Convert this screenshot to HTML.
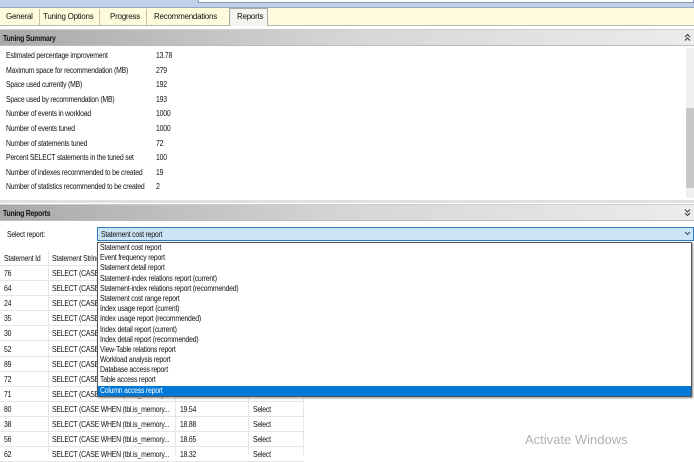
<!DOCTYPE html>
<html><head><style>
*{margin:0;padding:0;box-sizing:border-box}
body{width:694px;height:455px;overflow:hidden;background:#fff;font-family:"Liberation Sans",sans-serif;font-size:8px;color:#111;position:relative;letter-spacing:-0.25px}
.a{position:absolute;white-space:nowrap}
.n{transform:scaleX(0.86);transform-origin:0 0}
.hdr{position:absolute;left:0;width:694px;height:17px;background:linear-gradient(to right,#a9a9a9,#d6d6d6 50%,#ececec);font-weight:bold;padding:4px 0 0 3px;border-top:1px solid #ccc;border-bottom:1px solid #bbb}
.tab{position:absolute;top:9px;height:16px;line-height:16px;border-right:1px solid #c8c4a0;padding:0 6px}
.row{position:absolute;left:0;height:15px;line-height:15px;width:304px;border-bottom:1px solid #e6e6e6}
.row span{position:absolute;transform:scaleX(0.86);transform-origin:0 0}
.dd div{height:10.2px;line-height:10.2px;padding-left:2px}
.dd div span{display:inline-block;transform:scaleX(0.86);transform-origin:0 0}
</style></head><body>
<div class="a" style="left:0;top:0;width:694px;height:8px;background:#bfd0e8;border-bottom:1px solid #8fa8c8"></div>
<div class="a" style="left:198px;top:0;width:496px;height:3px;background:#fff;border:1px solid #8a9ab0;border-top:none"></div>
<div class="a" style="left:0;top:8px;width:694px;height:18px;background:#fefcdc;border-bottom:1px solid #b8b8b0"></div>
<div class="tab" style="left:0">General</div>
<div class="tab" style="left:37px">Tuning Options</div>
<div class="tab" style="left:104px">Progress</div>
<div class="tab" style="left:148px;border-right:none">Recommendations</div>
<div class="a" style="left:229px;top:8px;width:39px;height:18px;background:#f4f4f0;border:1px solid #aaa;border-bottom:none;padding:3px 0 0 7px">Reports</div>
<div class="hdr" style="top:29px"><span class="a n" style="position:static;display:inline-block">Tuning Summary</span></div>
<svg class="a" style="left:684px;top:33px" width="7" height="9"><path d="M1 4L3.5 1.5L6 4M1 7.5L3.5 5L6 7.5" stroke="#333" fill="none"/></svg>
<div id="sum"></div>
<div class="a" style="left:686px;top:48px;width:8px;height:150px;background:#f0f0f0"></div>
<div class="a" style="left:686px;top:108px;width:8px;height:80px;background:#c8c8c8"></div>
<div class="a" style="left:0;top:200px;width:694px;height:3px;background:#e0e0e0"></div>
<div class="hdr" style="top:204px"><span class="a n" style="position:static;display:inline-block">Tuning Reports</span></div>
<svg class="a" style="left:684px;top:208px" width="7" height="9"><path d="M1 1.5L3.5 4L6 1.5M1 5L3.5 7.5L6 5" stroke="#333" fill="none"/></svg>
<div class="a n" style="left:7px;top:230px">Select report:</div>
<div class="a" style="left:97px;top:227px;width:597px;height:14px;background:#cce4f7;border:1px solid #2a78c8;padding:2px 0 0 3px"><span style="display:inline-block" class="n">Statement cost report</span></div>
<svg class="a" style="left:684px;top:231px" width="7" height="5"><path d="M1 1L3.5 3.5L6 1" stroke="#444" fill="none"/></svg>
<div id="tbl"></div>
<div class="a dd" style="left:97px;top:242px;width:595px;height:155px;background:#fff;border:1px solid #555;box-shadow:1px 1px 2px #888">
<div><span>Statement cost report</span></div><div><span>Event frequency report</span></div><div><span>Statement detail report</span></div><div><span>Statement-index relations report (current)</span></div><div><span>Statement-index relations report (recommended)</span></div><div><span>Statement cost range report</span></div><div><span>Index usage report (current)</span></div><div><span>Index usage report (recommended)</span></div><div><span>Index detail report (current)</span></div><div><span>Index detail report (recommended)</span></div><div><span>View-Table relations report</span></div><div><span>Workload analysis report</span></div><div><span>Database access report</span></div><div><span>Table access report</span></div><div style="background:#0078d7;color:#fff"><span>Column access report</span></div>
</div>
<div class="a" style="left:525px;top:432px;font-size:13px;color:#b0b0b0;letter-spacing:0">Activate Windows</div>
<script>
var s=[["Estimated percentage improvement","13.78"],["Maximum space for recommendation (MB)","279"],["Space used currently (MB)","192"],["Space used by recommendation (MB)","193"],["Number of events in workload","1000"],["Number of events tuned","1000"],["Number of statements tuned","72"],["Percent SELECT statements in the tuned set","100"],["Number of indexes recommended to be created","19"],["Number of statistics recommended to be created","2"]];
var h="";s.forEach(function(r,i){var y=51+i*14.6;h+='<div class="a n" style="left:6px;top:'+y+'px">'+r[0]+'</div><div class="a n" style="left:156px;top:'+y+'px">'+r[1]+'</div>';});
document.getElementById("sum").outerHTML=h;
var ids=[76,64,24,35,30,52,89,72,71,80,38,56,62],cs=["","","","","","","","","","19.54","18.88","18.65","18.32"];
var t='<div class="row" style="top:251px"><span style="left:4px">Statement Id</span><span style="left:52px">Statement String</span></div>';
ids.forEach(function(d,i){var y=266+i*15.1;t+='<div class="row" style="top:'+y+'px"><span style="left:4px">'+d+'</span><span style="left:52px">SELECT (CASE WHEN (tbl.is_memory...</span><span style="left:180px">'+cs[i]+'</span><span style="left:253px">'+(cs[i]?"Select":"")+'</span></div>';});
t+='<div class="a" style="left:48px;top:251px;width:1px;height:204px;background:#e6e6e6"></div><div class="a" style="left:175px;top:251px;width:1px;height:204px;background:#e6e6e6"></div><div class="a" style="left:248px;top:251px;width:1px;height:204px;background:#e6e6e6"></div><div class="a" style="left:303px;top:251px;width:1px;height:204px;background:#e6e6e6"></div>';
document.getElementById("tbl").outerHTML=t;
</script>
</body></html>
